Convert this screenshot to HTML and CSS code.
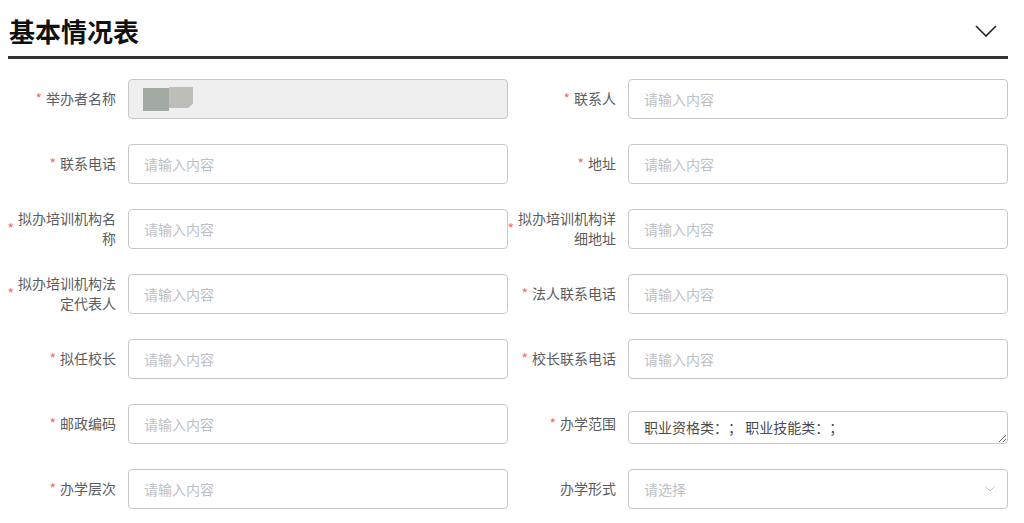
FILE: index.html
```html
<!DOCTYPE html>
<html lang="zh-CN">
<head>
<meta charset="utf-8">
<title>基本情况表</title>
<link rel="stylesheet" href="styles.css">
</head>
<body>
<div class="page">
  <div class="header">
    <h1 class="title">基本情况表</h1>
    <svg class="collapse" width="22" height="12" viewBox="0 0 22 12"><polyline points="1,1 11,11 21,1" fill="none" stroke="#222" stroke-width="1.6"/></svg>
  </div>
  <form class="form">
    <div class="item">
      <label class="label"><span class="req">*</span><span class="txt">举办者名称</span></label>
      <div class="content">
        <div class="box disabled"><span class="blob-a"></span><span class="blob-b"></span></div>
      </div>
    </div>
    <div class="item">
      <label class="label"><span class="req">*</span><span class="txt">联系人</span></label>
      <div class="content"><input class="box" placeholder="请输入内容"></div>
    </div>
    <div class="item">
      <label class="label"><span class="req">*</span><span class="txt">联系电话</span></label>
      <div class="content"><input class="box" placeholder="请输入内容"></div>
    </div>
    <div class="item">
      <label class="label"><span class="req">*</span><span class="txt">地址</span></label>
      <div class="content"><input class="box" placeholder="请输入内容"></div>
    </div>
    <div class="item">
      <label class="label"><span class="req">*</span><span class="txt">拟办培训机构名<br>称</span></label>
      <div class="content"><input class="box" placeholder="请输入内容"></div>
    </div>
    <div class="item">
      <label class="label"><span class="req">*</span><span class="txt">拟办培训机构详<br>细地址</span></label>
      <div class="content"><input class="box" placeholder="请输入内容"></div>
    </div>
    <div class="item">
      <label class="label"><span class="req">*</span><span class="txt">拟办培训机构法<br>定代表人</span></label>
      <div class="content"><input class="box" placeholder="请输入内容"></div>
    </div>
    <div class="item">
      <label class="label"><span class="req">*</span><span class="txt">法人联系电话</span></label>
      <div class="content"><input class="box" placeholder="请输入内容"></div>
    </div>
    <div class="item">
      <label class="label"><span class="req">*</span><span class="txt">拟任校长</span></label>
      <div class="content"><input class="box" placeholder="请输入内容"></div>
    </div>
    <div class="item">
      <label class="label"><span class="req">*</span><span class="txt">校长联系电话</span></label>
      <div class="content"><input class="box" placeholder="请输入内容"></div>
    </div>
    <div class="item">
      <label class="label"><span class="req">*</span><span class="txt">邮政编码</span></label>
      <div class="content"><input class="box" placeholder="请输入内容"></div>
    </div>
    <div class="item">
      <label class="label"><span class="req">*</span><span class="txt">办学范围</span></label>
      <div class="content bottom"><textarea class="area">职业资格类：； 职业技能类：；</textarea></div>
    </div>
    <div class="item">
      <label class="label"><span class="req">*</span><span class="txt">办学层次</span></label>
      <div class="content"><input class="box" placeholder="请输入内容"></div>
    </div>
    <div class="item">
      <label class="label"><span class="txt">办学形式</span></label>
      <div class="content">
        <div class="box select"><span class="ph">请选择</span>
          <svg class="arrow" width="10" height="6" viewBox="0 0 10 6"><polyline points="0.5,0.5 5,5 9.5,0.5" fill="none" stroke="#c0c4cc" stroke-width="1"/></svg>
        </div>
      </div>
    </div>
  </form>
</div>
</body>
</html>
```
FILE: styles.css
```css
* { box-sizing: border-box; }
html, body { margin: 0; padding: 0; background: #fff; }
body {
  font-family: "Noto Sans CJK SC", "Noto Sans", "Liberation Sans", sans-serif;
  font-size: 14px;
  color: #606266;
  text-spacing-trim: space-all;
}
.page {
  width: 1000px;
  margin-left: 8px;
}
.header {
  height: 59px;
  padding-top: 6px;
  padding-right: 11px;
  border-bottom: 3px solid #333;
  display: flex;
  align-items: center;
  justify-content: space-between;
}
.title {
  margin: 0;
  margin-left: 1px;
  font-size: 26px;
  line-height: 30px;
  font-weight: bold;
  color: #111;
}
.collapse { display: block; }
.form {
  margin: 20px 0 0;
  display: grid;
  grid-template-columns: 500px 500px;
  row-gap: 25px;
}
.item {
  display: flex;
  height: 40px;
}
.label {
  width: 120px;
  flex: 0 0 120px;
  padding-right: 12px;
  padding-bottom: 2px;
  display: flex;
  align-items: center;
  justify-content: flex-end;
  color: #5a5c60;
  line-height: 20px;
}
.req {
  color: #f56c6c;
  margin-right: 4px;
  flex: 0 0 auto;
}
.txt {
  text-align: right;
  white-space: nowrap;
  flex: 0 0 auto;
}
.content {
  flex: 1;
  display: flex;
  align-items: center;
}
.content.bottom { align-items: flex-end; }
.box {
  width: 100%;
  height: 40px;
  border: 1px solid #c6c8cc;
  border-radius: 4px;
  background: #fff;
  padding: 0 15px;
  font: inherit;
  font-size: 14px;
  color: #606266;
  outline: none;
}
.box::placeholder { color: #bcc0c7; }
.disabled {
  background: #efefef;
  display: flex;
  align-items: flex-start;
  padding-top: 7px;
  padding-left: 14px;
}
.blob-a {
  width: 26px;
  height: 23px;
  margin-top: 1px;
  background: #a3aaa3;
}
.blob-b {
  width: 24px;
  height: 21px;
  background: #bdbeba;
  clip-path: polygon(0 0, 100% 0, 100% 80%, 80% 100%, 0 100%);
}
.area {
  width: 100%;
  height: 33px;
  border: 1px solid #c6c8cc;
  border-radius: 4px;
  padding: 5px 15px;
  font: inherit;
  font-size: 14px;
  line-height: 21px;
  color: #4a4c50;
  text-spacing-trim: space-all;
  resize: vertical;
  outline: none;
  display: block;
}
.select {
  display: flex;
  align-items: center;
  justify-content: space-between;
  padding-right: 12px;
}
.ph { color: #bcc0c7; }
.arrow { display: block; }
```
